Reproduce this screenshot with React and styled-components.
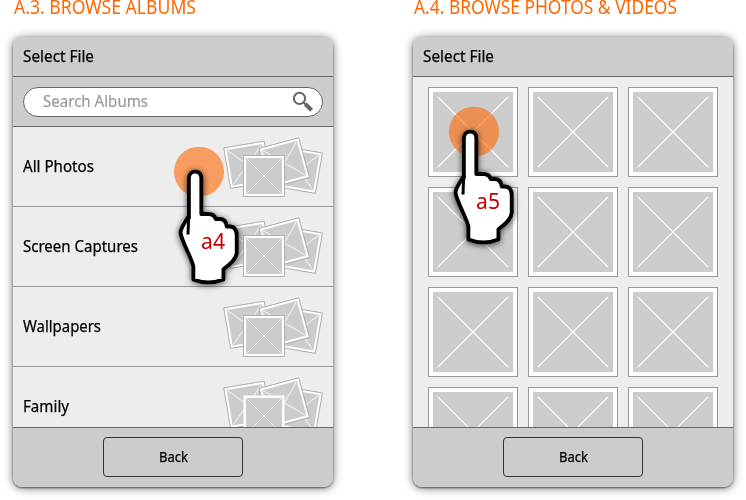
import React, { useLayoutEffect, useRef, useState } from "react";
import styled, { createGlobalStyle } from "styled-components";

const GlobalStyle = createGlobalStyle`
  * { box-sizing: border-box; }
  body {
    margin: 0;
    background: #fff;
    font-family: "Noto Sans", "Open Sans", sans-serif;
    overflow: hidden;
  }
`;

const Board = styled.main`
  display: flex;
  gap: 80px;
  height: 500px;
  padding-left: 13px;
  overflow: hidden;
`;

const Screen = styled.section`
  position: relative;
  flex: none;
  width: 320px;
`;

const Title = styled.h1`
  height: 37px;
  margin: 0;
  padding-left: 1px;
  color: #ff6600;
  font-size: 19.2px;
  font-weight: 400;
  line-height: 13px;
`;

const Phone = styled.div`
  display: flex;
  flex-direction: column;
  height: 450px;
  overflow: hidden;
  border-radius: 9px;
  background: #ededed;
  box-shadow: 0 1px 2px rgba(0, 0, 0, 0.5), 0 1px 10px rgba(0, 0, 0, 0.55);
`;

const Header = styled.header`
  flex: none;
  height: 40px;
  padding-left: 10px;
  border-bottom: 1px solid #666;
  background: #ccc;
  color: #000;
  font-size: 16px;
  -webkit-text-stroke: 0.25px #000;
  line-height: 39px;
`;

const SearchBar = styled.div`
  flex: none;
  height: 50px;
  padding: 10px 10px 9px;
  border-bottom: 1px solid #666;
  background: #ccc;
`;

const SearchField = styled.div`
  display: flex;
  justify-content: space-between;
  height: 30px;
  padding: 0 8px 0 19px;
  border: 1px solid #666;
  border-radius: 15px;
  background: #fff;
  color: #999;
  font-size: 16px;
  -webkit-text-stroke: 0.2px #999;
  line-height: 27px;
`;

const SearchIcon = styled.svg`
  flex: none;
  width: 22px;
  height: 22px;
  margin-top: 3px;
`;

const Body = styled.div`
  flex: 1;
  min-height: 0;
  overflow: hidden;
`;

const AlbumRow = styled.div`
  display: flex;
  justify-content: space-between;
  height: 80px;
  padding-left: 10px;
  border-bottom: 1px solid #999;
  font-size: 16px;
  -webkit-text-stroke: 0.25px #000;
  line-height: 79px;
`;

const StackArt = styled.svg`
  flex: none;
  width: 112px;
  height: 79px;
`;

const PhotoGrid = styled.div`
  display: grid;
  grid-template-columns: repeat(3, 90px);
  grid-auto-rows: 90px;
  gap: 10px;
  padding: 10px 15px;
`;

const Photo = styled.div`
  padding: 4px;
  border: 1px solid #999;
  background: #fff;
`;

const PhotoArt = styled.svg`
  display: block;
  width: 80px;
  height: 80px;
  background: #ccc;
`;

const Footer = styled.footer`
  flex: none;
  display: flex;
  justify-content: center;
  height: 60px;
  padding-top: 9px;
  border-top: 1px solid #666;
  background: #ccc;
`;

const BackButton = styled.button`
  width: 140px;
  height: 40px;
  padding: 0;
  border: 1px solid #333;
  border-radius: 4px;
  background: transparent;
  color: #000;
  font: 400 13.5px/36px "Noto Sans", "Open Sans", sans-serif;
  -webkit-text-stroke: 0.25px #000;
`;

const Pointer = styled.div`
  position: absolute;
  left: ${(p) => p.$x}px;
  top: ${(p) => p.$y}px;
  width: 100px;
  height: 160px;
`;

const HandArt = styled.svg`
  display: block;
  width: 100px;
  height: 160px;
  overflow: visible;
`;

const PointerLabel = styled.span`
  position: absolute;
  left: 41px;
  top: 97px;
  color: #c00000;
  font-size: 21.5px;
  line-height: 28px;
`;

const Fit = styled.span`
  display: inline-block;
  width: ${(p) => p.$width}px;
  white-space: nowrap;
  text-align: left;
`;

const FitInner = styled.span`
  display: inline-block;
  transform-origin: left center;
`;

/* Condenses a label horizontally so that it fills the given width. */
function FitText({ width, children }) {
  const ref = useRef(null);
  const [scale, setScale] = useState(1);
  useLayoutEffect(() => {
    const natural = parseFloat(getComputedStyle(ref.current).width);
    if (natural) setScale(width / natural);
  }, [width, children]);
  return (
    <Fit $width={width}>
      <FitInner ref={ref} style={{ transform: `scaleX(${scale})` }}>
        {children}
      </FitInner>
    </Fit>
  );
}

function StackCard({ x, y, angle, outlined = true }) {
  return (
    <g transform={`translate(${x} ${y}) rotate(${angle})`}>
      <rect width="41" height="41" fill="#fff" stroke={outlined ? "#aaa" : "none"} strokeWidth="0.9" />
      <rect x="2.5" y="2.5" width="36" height="36" fill="#ccc" />
      <path d="M3.5 3.5 37.5 37.5M37.5 3.5 3.5 37.5" stroke="#fff" strokeWidth="0.8" />
    </g>
  );
}

function PhotoStack({ outlined }) {
  return (
    <StackArt viewBox="221 127 112 79">
      <StackCard x={223.8} y={147.9} angle={-9.5} />
      <StackCard x={282} y={146} angle={9.8} />
      <StackCard x={259.2} y={148.4} angle={-15} />
      <StackCard x={243.5} y={155.5} angle={0} outlined={outlined} />
    </StackArt>
  );
}

function Tap({ x, y, label }) {
  return (
    <Pointer $x={x} $y={y}>
      <HandArt viewBox="0 0 100 160">
        <circle cx="39" cy="41.7" r="25" fill="#ff6600" fillOpacity="0.6" />
        <g filter="drop-shadow(0 1px 3px rgba(0,0,0,.75))">
          <path
            d="M28.9 88 V48.5 C28.9 44.2 31.5 41.7 35.2 41.7 C39 41.7 41.3 44.2 41.3 48.5 V84 H48.5 C52.3 84 54.7 85.7 55.6 89 H59.3 C63.4 89 66.3 91.7 66.7 96.5 H70 C74.3 96.8 76.6 100 76.7 105 V123 C76.2 129 70 134.5 63.4 139.2 V149.5 C53.5 153.3 42.5 153 33.4 149.5 V136.5 C32 130 27.7 122 24.5 114.5 C22.8 110 20.3 105 20.6 101.5 C21.6 97 25.6 91 28.9 86 Z"
            fill="#fff"
            stroke="#000"
            strokeWidth="3.8"
            strokeLinejoin="round"
          />
          <path d="M28.7 85 L28 104.5" fill="none" stroke="#000" strokeWidth="3" />
        </g>
      </HandArt>
      <PointerLabel>
        <FitText width={24}>{label}</FitText>
      </PointerLabel>
    </Pointer>
  );
}

function BackBar() {
  return (
    <Footer>
      <BackButton>
        <FitText width={29}>Back</FitText>
      </BackButton>
    </Footer>
  );
}

const albums = [
  { name: "All Photos", width: 71 },
  { name: "Screen Captures", width: 115 },
  { name: "Wallpapers", width: 78 },
  { name: "Family", width: 46 },
];

export default function App() {
  return (
    <>
      <GlobalStyle />
      <Board>
        <Screen>
          <Title><FitText width={182}>A.3. BROWSE ALBUMS</FitText></Title>
          <Phone>
            <Header><FitText width={71}>Select File</FitText></Header>
            <SearchBar>
              <SearchField>
                <FitText width={105}>Search Albums</FitText>
                <SearchIcon viewBox="0 0 22 22" fill="none" stroke="#666">
                  <circle cx="7.5" cy="7.4" r="5.6" strokeWidth="2" />
                  <path d="M11.8 11.6 14 13.8" strokeWidth="2" />
                  <path d="M13.3 13 19.6 19.2" strokeWidth="4" />
                </SearchIcon>
              </SearchField>
            </SearchBar>
            <Body>
              {albums.map((album) => (
                <AlbumRow key={album.name}>
                  <FitText width={album.width}>{album.name}</FitText>
                  <PhotoStack outlined={album.name !== "Family"} />
                </AlbumRow>
              ))}
            </Body>
            <BackBar />
          </Phone>
          <Tap x={147} y={130} label="a4" />
        </Screen>
        <Screen>
          <Title><FitText width={263}>A.4. BROWSE PHOTOS &amp; VIDEOS</FitText></Title>
          <Phone>
            <Header><FitText width={71}>Select File</FitText></Header>
            <Body>
              <PhotoGrid>
                {Array.from({ length: 12 }, (_, i) => (
                  <Photo key={i}>
                    <PhotoArt viewBox="0 0 80 80">
                      <path d="M5 5 75 75M75 5 5 75" stroke="#fff" strokeWidth="1.2" />
                    </PhotoArt>
                  </Photo>
                ))}
              </PhotoGrid>
            </Body>
            <BackBar />
          </Phone>
          <Tap x={22} y={90} label="a5" />
        </Screen>
      </Board>
    </>
  );
}
